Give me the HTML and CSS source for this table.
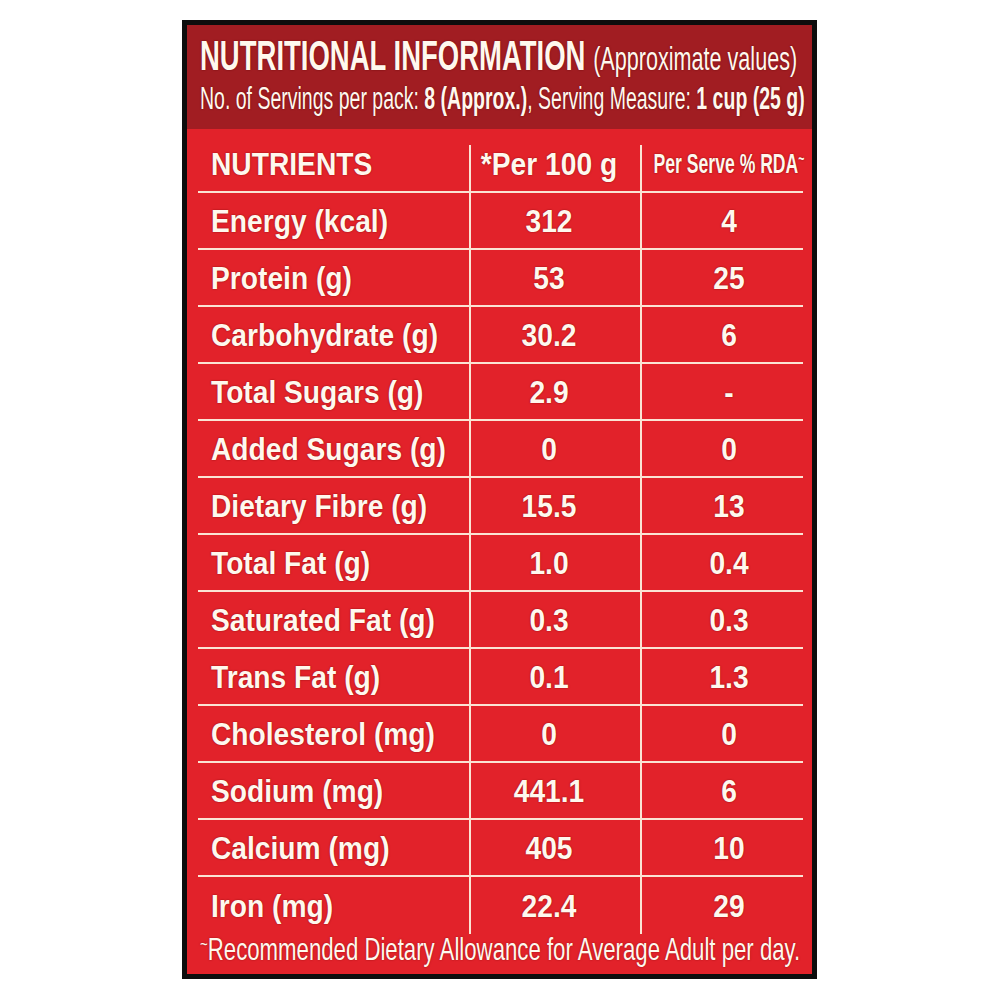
FILE: index.html
```html
<!DOCTYPE html>
<html lang="en">
<head>
<meta charset="utf-8">
<title>Nutritional Information</title>
<link rel="stylesheet" href="styles.css">
</head>
<body>
<div class="label">
  <header class="head">
    <div class="title"><span class="fit"><b>NUTRITIONAL INFORMATION</b> <span class="approx">(Approximate values)</span></span></div>
    <div class="serving"><span class="fit">No. of Servings per pack: <b>8 (Approx.)</b>, Serving Measure: <b>1 cup (25 g)</b></span></div>
  </header>
  <div class="table">
    <div class="row top">
      <div class="c name"><span class="t">NUTRIENTS</span></div>
      <div class="c val"><span class="t">*Per 100 g</span></div>
      <div class="c rda"><span class="t small">Per Serve % RDA<sup class="tilde">~</sup></span></div>
    </div>
    <div class="row"><div class="c name"><span class="t">Energy (kcal)</span></div><div class="c val"><span class="t">312</span></div><div class="c rda"><span class="t">4</span></div></div>
    <div class="row"><div class="c name"><span class="t">Protein (g)</span></div><div class="c val"><span class="t">53</span></div><div class="c rda"><span class="t">25</span></div></div>
    <div class="row"><div class="c name"><span class="t">Carbohydrate (g)</span></div><div class="c val"><span class="t">30.2</span></div><div class="c rda"><span class="t">6</span></div></div>
    <div class="row"><div class="c name"><span class="t">Total Sugars (g)</span></div><div class="c val"><span class="t">2.9</span></div><div class="c rda"><span class="t">-</span></div></div>
    <div class="row"><div class="c name"><span class="t">Added Sugars (g)</span></div><div class="c val"><span class="t">0</span></div><div class="c rda"><span class="t">0</span></div></div>
    <div class="row"><div class="c name"><span class="t">Dietary Fibre (g)</span></div><div class="c val"><span class="t">15.5</span></div><div class="c rda"><span class="t">13</span></div></div>
    <div class="row"><div class="c name"><span class="t">Total Fat (g)</span></div><div class="c val"><span class="t">1.0</span></div><div class="c rda"><span class="t">0.4</span></div></div>
    <div class="row"><div class="c name"><span class="t">Saturated Fat (g)</span></div><div class="c val"><span class="t">0.3</span></div><div class="c rda"><span class="t">0.3</span></div></div>
    <div class="row"><div class="c name"><span class="t">Trans Fat (g)</span></div><div class="c val"><span class="t">0.1</span></div><div class="c rda"><span class="t">1.3</span></div></div>
    <div class="row"><div class="c name"><span class="t">Cholesterol (mg)</span></div><div class="c val"><span class="t">0</span></div><div class="c rda"><span class="t">0</span></div></div>
    <div class="row"><div class="c name"><span class="t">Sodium (mg)</span></div><div class="c val"><span class="t">441.1</span></div><div class="c rda"><span class="t">6</span></div></div>
    <div class="row"><div class="c name"><span class="t">Calcium (mg)</span></div><div class="c val"><span class="t">405</span></div><div class="c rda"><span class="t">10</span></div></div>
    <div class="row last"><div class="c name"><span class="t">Iron (mg)</span></div><div class="c val"><span class="t">22.4</span></div><div class="c rda"><span class="t">29</span></div></div>
  </div>
  <p class="note"><span class="fit"><sup class="tilde">~</sup>Recommended Dietary Allowance for Average Adult per day.</span></p>
</div>
</body>
</html>
```

FILE: styles.css
```css
* { box-sizing: border-box; }

html, body {
  margin: 0;
  padding: 0;
  background: #ffffff;
}

body {
  font-family: "Liberation Sans", Arial, sans-serif;
  color: #fff8ee;
}

.label {
  width: 635px;
  height: 959px;
  margin: 20px 0 0 182px;
  border: 5px solid #0d0d0d;
  background: #e2222a;
  display: flex;
  flex-direction: column;
}

.head {
  height: 104px;
  flex: none;
  background: #a11d22;
  padding: 12px 0 0 13px;
  display: flex;
  flex-direction: column;
  gap: 1px;
}

/* condensed look: narrow font size, stretched vertically */
.fit {
  display: inline-block;
  white-space: nowrap;
  transform-origin: left center;
}

.title {
  height: 40px;
  line-height: 40px;
  font-size: 27.5px;
  text-shadow: 0 0 1.5px rgba(90, 0, 0, 0.8);
}
.title .fit { transform: scaleY(1.53); }
.title b { font-weight: 700; }
.approx { font-size: 21.6px; font-weight: 400; }

.serving {
  height: 40px;
  line-height: 40px;
  font-size: 19.5px;
  text-shadow: 0 0 1.5px rgba(90, 0, 0, 0.8);
}
.serving .fit { transform: scaleY(1.58); }
.serving b { font-weight: 700; }

.table {
  flex: none;
  padding: 16px 9px 0 11px;
}

.row {
  display: grid;
  grid-template-columns: 271px 171px 163px;
  height: 57px;
  border-bottom: 2px solid #fbe4d4;
}
.row.top { height: 48px; }
.row.top .c { padding-bottom: 10px; }
.row.last { border-bottom: none; }

.c {
  display: flex;
  align-items: center;
  padding-top: 2px;
  font-weight: 700;
  font-size: 28.2px;
  text-shadow: 0 0 1.5px rgba(110, 0, 0, 0.9);
  white-space: nowrap;
}

.t {
  display: inline-block;
  transform: scaleY(1.14);
}

.name { padding-left: 13px; }
.name .t { transform-origin: left center; }

.val {
  justify-content: center;
  padding-right: 13px;
  border-left: 2px solid #fbe4d4;
}
.rda {
  justify-content: center;
  padding-left: 13px;
  border-left: 2px solid #fbe4d4;
}
.val .t, .rda .t { transform-origin: center center; }

.t.small {
  font-size: 17.6px;
  transform: scaleY(1.6);
}

.tilde {
  font-size: 0.6em;
  vertical-align: 0.55em;
  line-height: 0;
}

.note {
  margin: 0;
  height: 32px;
  line-height: 32px;
  padding-left: 13px;
  font-size: 22.2px;
  text-shadow: 0 0 1.5px rgba(110, 0, 0, 0.7);
}
.note .fit { transform: scaleY(1.4); }
```
